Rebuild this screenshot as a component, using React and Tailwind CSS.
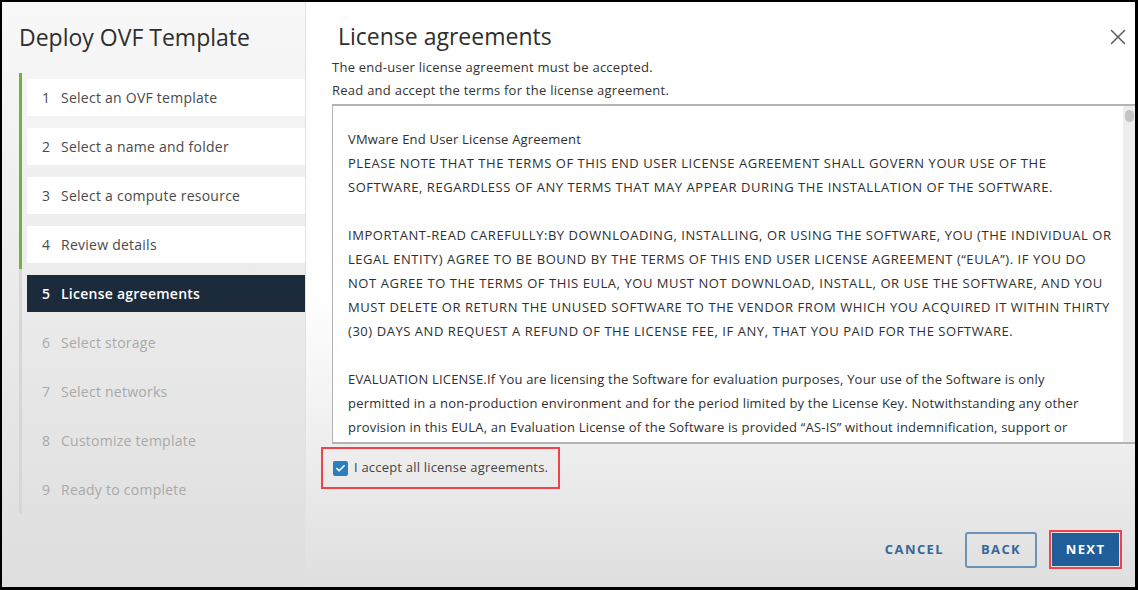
import { Check, X } from 'lucide-react';

const STEPS = [
  'Select an OVF template',
  'Select a name and folder',
  'Select a compute resource',
  'Review details',
  'License agreements',
  'Select storage',
  'Select networks',
  'Customize template',
  'Ready to complete',
];

const ACTIVE = 4;

// caps lines are set a bit looser, the original font has wide capitals
const EULA = [
  ['VMware End User License Agreement', false],
  ['PLEASE NOTE THAT THE TERMS OF THIS END USER LICENSE AGREEMENT SHALL GOVERN YOUR USE OF THE', true],
  ['SOFTWARE, REGARDLESS OF ANY TERMS THAT MAY APPEAR DURING THE INSTALLATION OF THE SOFTWARE.', true],
  ['', false],
  ['IMPORTANT-READ CAREFULLY:BY DOWNLOADING, INSTALLING, OR USING THE SOFTWARE, YOU (THE INDIVIDUAL OR', true],
  ['LEGAL ENTITY) AGREE TO BE BOUND BY THE TERMS OF THIS END USER LICENSE AGREEMENT (“EULA”). IF YOU DO', true],
  ['NOT AGREE TO THE TERMS OF THIS EULA, YOU MUST NOT DOWNLOAD, INSTALL, OR USE THE SOFTWARE, AND YOU', true],
  ['MUST DELETE OR RETURN THE UNUSED SOFTWARE TO THE VENDOR FROM WHICH YOU ACQUIRED IT WITHIN THIRTY', true],
  ['(30) DAYS AND REQUEST A REFUND OF THE LICENSE FEE, IF ANY, THAT YOU PAID FOR THE SOFTWARE.', true],
  ['', false],
  ['EVALUATION LICENSE.If You are licensing the Software for evaluation purposes, Your use of the Software is only', false],
  ['permitted in a non-production environment and for the period limited by the License Key. Notwithstanding any other', false],
  ['provision in this EULA, an Evaluation License of the Software is provided “AS-IS” without indemnification, support or', false],
];

function Step({ n, label, i }) {
  const done = i < ACTIVE;
  const active = i === ACTIVE;
  return (
    <div className="flex h-[49px]">
      <div className={`w-[3px] ${done ? 'bg-[#6cb33f]' : 'bg-[#d6d6d6]'}`} />
      <div className="flex-1 pl-[5px] pt-[6px]">
        <div
          className={`flex items-center h-[37px] pl-[15px] text-[14px] tracking-[0.25px] ${
            active
              ? 'bg-[#1c2b3b] text-white font-semibold'
              : done
              ? 'bg-white text-[#4a4a4a]'
              : 'text-[#a9a9a9]'
          }`}
        >
          <span className="w-[19px]">{n}</span>
          <span>{label}</span>
        </div>
      </div>
    </div>
  );
}

export default function App() {
  return (
    <div
      className="w-[1138px] h-[590px] bg-black pt-[2px] pl-[2px] pr-[3px] pb-[3px]"
      style={{ fontFamily: '"Open Sans", "Liberation Sans", sans-serif' }}
    >
      <div className="flex h-full">
        {/* Sidebar */}
        <div className="w-[304px] shrink-0 bg-gradient-to-b from-[#f8f8f8] to-[#dedede] border-r border-[#e2e2e2]">
          <h1 className="pl-[17px] pt-[20px] text-[23px] leading-[30px] text-[#2e2e2e]">Deploy OVF Template</h1>
          <div className="pl-[17px] mt-[21px]">
            {STEPS.map((s, i) => (
              <Step key={s} n={i + 1} label={s} i={i} />
            ))}
          </div>
        </div>

        {/* Main */}
        <div className="flex-1 flex flex-col bg-gradient-to-b from-white via-white to-[#dfdfdf] pl-[26px]">
          <div className="flex justify-between h-[54px]">
            <h2 className="pl-[6px] pt-[19px] text-[23px] leading-[30px] text-[#2e2e2e]">License agreements</h2>
            <X className="w-[26px] h-[26px] text-[#555] mr-[4px] mt-[22px]" strokeWidth={1.3} />
          </div>
          <div className="text-[13px] leading-[23px] text-[#333] tracking-[0.25px]">
            <p>The end-user license agreement must be accepted.</p>
            <p>Read and accept the terms for the license agreement.</p>
          </div>

          {/* EULA box */}
          <div className="mt-[2px] h-[340px] flex border-t-2 border-l border-b-2 border-[#b4b4b4] bg-white overflow-hidden">
            <div className="flex-1 pl-[15px] pt-[21px] text-[13px] leading-[24px] text-[#2f2f2f] overflow-hidden">
              {EULA.map(([line, caps], i) => (
                <div key={i} className={`whitespace-nowrap h-[24px] ${caps ? 'tracking-[0.55px]' : 'tracking-[0.2px]'}`}>
                  {line}
                </div>
              ))}
            </div>
            <div className="w-[12px] bg-[#ededed] pt-[4px] flex justify-center">
              <div className="w-[9px] h-[12px] rounded-full bg-[#c4c4c4]" />
            </div>
          </div>

          {/* Accept */}
          <div className="mt-[3px] -ml-[11px] self-start border-2 border-[#f0424a] w-[239px] h-[42px] flex items-center pl-[10px] gap-[6px]">
            <div className="w-[15px] h-[15px] rounded-[2px] bg-[#2c7ec0] flex items-center justify-center">
              <Check className="w-[11px] h-[11px] text-white" strokeWidth={3.5} />
            </div>
            <span className="text-[13px] text-[#444] tracking-[0.2px]">I accept all license agreements.</span>
          </div>

          {/* Footer */}
          <div className="flex items-center justify-end mt-auto mb-[18px] mr-[13px] text-[13px] font-bold tracking-[1.4px]">
            <button className="text-[#35699a] h-[35px]">CANCEL</button>
            <button className="text-[#35699a] border-2 border-[#6c93b6] rounded-[3px] w-[72px] h-[36px] ml-[21px]">BACK</button>
            <div className="border-2 border-[#f0424a] p-[1px] ml-[12px]">
              <button className="bg-[#1f5e98] text-white w-[67px] h-[33px]">NEXT</button>
            </div>
          </div>
        </div>
      </div>
    </div>
  );
}
